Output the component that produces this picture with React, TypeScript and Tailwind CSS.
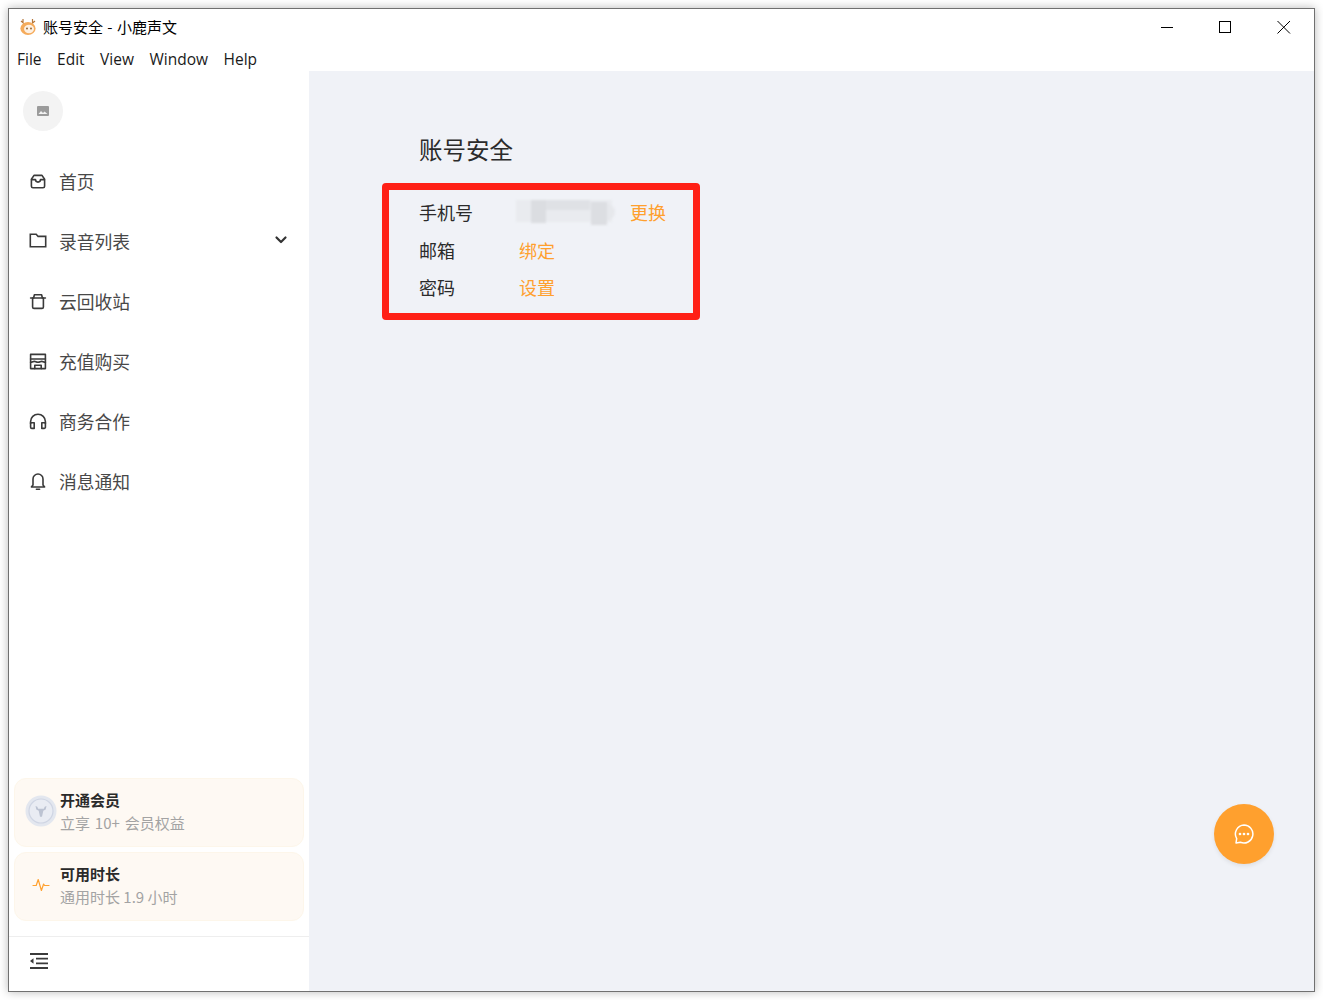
import React from "react";

const cjk = `font-['Noto_Sans_CJK_SC','Noto_Sans',sans-serif]`;

const stroke = { fill: "none", stroke: "#3a3a3a", strokeWidth: 1.6, strokeLinejoin: "round" as const, strokeLinecap: "round" as const };

const Tray = () => (
  <svg width="18" height="18" viewBox="0 0 18 18" {...stroke}>
    <path d="M5 3.4h8l2.6 3.8v7a1.6 1.6 0 0 1-1.6 1.6H4a1.6 1.6 0 0 1-1.6-1.6V7.2z" />
    <path d="M2.6 7.6h3.9a2.5 2.5 0 0 0 5 0h3.9" />
  </svg>
);
const Folder = () => (
  <svg width="18" height="18" viewBox="0 0 18 18" {...stroke} strokeLinejoin="miter">
    <path d="M1.3 2.2h5.9l1.9 2.2h7.6v10.4H1.3z" />
  </svg>
);
const Trash = () => (
  <svg width="18" height="18" viewBox="0 0 18 18" {...stroke}>
    <path d="M1.6 6h14.8" />
    <path d="M4.6 6l.8-3.2h7.2l.8 3.2" />
    <path d="M3.6 6v9a1.4 1.4 0 0 0 1.4 1.4h8a1.4 1.4 0 0 0 1.4-1.4V6" />
  </svg>
);
const Store = () => (
  <svg width="18" height="18" viewBox="0 0 18 18" {...stroke}>
    <path d="M1.6 2.4h14.8v14.2H1.6z" />
    <path d="M1.6 7h14.8" />
    <path d="M1.6 10.2c1.9 0 2.4-.8 3.7-.8s1.8.8 3.7.8 2.4-.8 3.7-.8 1.8.8 3.7.8" />
    <path d="M5.8 16.6v-3.4h6.4v3.4" />
  </svg>
);
const Headphones = () => (
  <svg width="18" height="18" viewBox="0 0 18 18" {...stroke}>
    <path d="M1.6 11.4V9.6a7.4 7.4 0 0 1 14.8 0v1.8" />
    <path d="M1.6 10.8h3.6v5.6H2.8a1.2 1.2 0 0 1-1.2-1.2zM16.4 10.8h-3.6v5.6h2.4a1.2 1.2 0 0 0 1.2-1.2z" />
  </svg>
);
const Bell = () => (
  <svg width="18" height="18" viewBox="0 0 18 18" {...stroke}>
    <path d="M9 2a5 5 0 0 0-5 5v6l-1.6 2h13.2L14 13V7a5 5 0 0 0-5-5z" />
    <path d="M7.4 17.2h3.2" />
  </svg>
);

const nav = [
  { label: "首页", icon: <Tray /> },
  { label: "录音列表", icon: <Folder />, chevron: true },
  { label: "云回收站", icon: <Trash /> },
  { label: "充值购买", icon: <Store /> },
  { label: "商务合作", icon: <Headphones /> },
  { label: "消息通知", icon: <Bell /> },
];

function Promo({ title, sub, subClass, icon }: { title: string; sub: string; subClass: string; icon: React.ReactNode }) {
  return (
    <div className="h-[69px] rounded-[12px] border border-[#fdf6ea] bg-[#fef9f3] flex items-center">
      <div className="w-[45px] pl-[6px] mb-[4px] flex justify-center items-center shrink-0">{icon}</div>
      <div className="flex flex-col mb-[2px]">
        <div className="text-[15px] leading-[22px] font-bold text-[#2a2a2a]">{title}</div>
        <div className={`text-[15px] leading-[22px] mt-[1px] text-[#a3a3a3] ${subClass}`}>{sub}</div>
      </div>
    </div>
  );
}

const Medal = () => (
  <svg width="34" height="34" viewBox="0 0 34 34">
    <circle cx="17" cy="17" r="15.5" fill="#e3e7ef" />
    <circle cx="17" cy="17" r="12" fill="#e9ecf3" stroke="#cfd5e3" strokeWidth="1.2" />
    <path d="M11.5 12l1.8.8.9 2h5.6l.9-2 1.8-.8-.8 3.6-2.4 1.2-1.3 6h-2l-1.3-6-2.4-1.2z" fill="#bcc3d2" />
  </svg>
);

const Pulse = () => (
  <svg width="18" height="16" viewBox="0 0 18 16" fill="none" stroke="#ffa12f" strokeWidth="1.2" strokeLinejoin="round" strokeLinecap="round">
    <path d="M1 8.5h3.2l2-6 3.2 11 2.2-6.5 1 1.5H17" />
  </svg>
);

const Logo = () => (
  <svg width="18" height="18" viewBox="0 0 18 18">
    <path d="M4 1v4M2 3l3 2.5M13.5 1v4M16 3l-3 2.5" stroke="#b5763a" strokeWidth="1.2" fill="none" />
    <ellipse cx="9" cy="10.5" rx="7.6" ry="6.5" fill="#f5ab5b" />
    <ellipse cx="10" cy="11" rx="5" ry="4.2" fill="#fdf0e2" />
    <circle cx="8" cy="10.5" r="0.9" fill="#8a5a2c" />
    <circle cx="12" cy="10.5" r="0.9" fill="#8a5a2c" />
  </svg>
);

function Row({ label, children }: { label: string; children: React.ReactNode }) {
  return (
    <div className="flex items-center h-[37.5px]">
      <div className="w-[100px] text-[#2b2b2b]">{label}</div>
      {children}
    </div>
  );
}

export default function App() {
  return (
    <div className={`w-[1323px] h-[1000px] bg-white p-[8px] overflow-hidden ${cjk}`}>
      <div className="w-[1307px] h-[984px] border border-[#707070] bg-white flex flex-col shadow-[0_0_9px_rgba(0,0,0,0.28)]">
        <div className="h-[31px] shrink-0 flex items-center pl-[10px] pt-[4px]">
          <Logo />
          <span className="ml-[6px] text-[15px] leading-[20px] text-black [word-spacing:1px]">账号安全 - 小鹿声文</span>
          <div className="ml-auto flex items-center pt-[2px]">
            <svg width="60" height="20" viewBox="0 0 60 20" fill="none" stroke="#000" strokeWidth="1"><path d="M25 9.5h12" /></svg>
            <svg width="58" height="20" viewBox="0 0 58 20" fill="none" stroke="#000" strokeWidth="1"><rect x="23.5" y="3.5" width="11" height="11" /></svg>
            <svg width="60" height="20" viewBox="0 0 60 20" fill="none" stroke="#000" strokeWidth="1"><path d="M23.5 3l12.5 12.5M36 3L23.5 15.5" /></svg>
          </div>
        </div>
        <div className="h-[31px] shrink-0 flex items-center pl-[8px] pt-[6px] gap-[15.5px] font-['Open_Sans',sans-serif] text-[15.5px] leading-[20px] text-[#1a1a1a]">
          <span>File</span><span>Edit</span><span>View</span><span>Window</span><span>Help</span>
        </div>
        <div className="flex-1 flex min-h-0">
          <aside className="w-[300px] shrink-0 bg-white flex flex-col">
            <div className="h-[40px] w-[40px] mt-[20px] ml-[14px] rounded-full bg-[#f3f3f3] flex items-center justify-center shrink-0">
              <svg width="12" height="10" viewBox="0 0 12 10">
                <rect width="12" height="10" rx="1" fill="#9b9b9b" />
                <path d="M1.5 8l2.5-3 2 2 1.5-1.5L10.5 8z" fill="#f3f3f3" />
              </svg>
            </div>
            <nav className="mt-[20px] flex flex-col">
              {nav.map((n) => (
                <div key={n.label} className="h-[60px] flex items-center pl-[20px] pr-[21px] text-[17.8px] leading-[24px] text-[#484848]">
                  {n.icon}
                  <span className="ml-[12px] mb-[1px]">{n.label}</span>
                  {n.chevron && (
                    <svg className="ml-auto mb-[2px]" width="14" height="14" viewBox="0 0 14 14" fill="none" stroke="#333" strokeWidth="2.2" strokeLinecap="round" strokeLinejoin="round">
                      <path d="M2.5 4.5L7 9l4.5-4.5" />
                    </svg>
                  )}
                </div>
              ))}
            </nav>
            <div className="mt-auto px-[5px] flex flex-col gap-[5px]">
              <Promo title="开通会员" sub="立享 10+ 会员权益" subClass="[word-spacing:1.5px]" icon={<Medal />} />
              <Promo title="可用时长" sub="通用时长 1.9 小时" subClass="[word-spacing:0px]" icon={<Pulse />} />
            </div>
            <div className="mt-[15px] h-[55px] shrink-0 border-t border-[#eeeeee] flex items-center pl-[21px] pb-[7px]">
              <svg width="18" height="16" viewBox="0 0 18 16" fill="none" stroke="#3a3a3a" strokeWidth="1.8">
                <path d="M0 1h18M6 5.7h12M6 10.3h12M0 15h18" />
                <path d="M3.5 5.2v5.6L0 8z" fill="#3a3a3a" stroke="none" />
              </svg>
            </div>
          </aside>
          <main className="flex-1 bg-[#f0f2f7] relative pl-[110px] pt-[61px]">
            <h1 className="text-[23.5px] leading-[34px] font-normal text-[#2b2b2b]">账号安全</h1>
            <div className="mt-[17px] -ml-[37px] w-[318px] h-[137px] border-[7px] border-[#ff2016] rounded-[4px] pl-[30px] pt-[3.5px] text-[18px] leading-[24px]">
              <Row label="手机号">
                <div className="relative w-[100px] h-[26px] mt-[2px] shrink-0 blur-[1px]">
                  <div className="absolute left-[-3px] top-0 w-[96px] h-[22px] bg-[#e9ebef]" />
                  <div className="absolute left-[12px] top-0 w-[15px] h-[23px] bg-[#dbdde1]" />
                  <div className="absolute left-[27px] top-0 w-[44px] h-[10px] bg-[#dfe1e5]" />
                  <div className="absolute left-[72px] top-[2px] w-[16px] h-[23px] bg-[#dcdee2]" />
                  <div className="absolute left-[88px] top-[4px] w-[8px] h-[16px] rounded-r-full bg-[#e6e8ec]" />
                </div>
                <span className="ml-[11px] text-[#ffa02e]">更换</span>
              </Row>
              <Row label="邮箱"><span className="text-[#ffa02e]">绑定</span></Row>
              <Row label="密码"><span className="text-[#ffa02e]">设置</span></Row>
            </div>
            <div className="absolute right-[40px] bottom-[127px] w-[60px] h-[60px] rounded-full bg-[#ffa02e] shadow-[0_2px_4px_rgba(0,0,0,0.08)] flex items-center justify-center">
              <svg width="20" height="20" viewBox="0 0 20 20" fill="none" stroke="#fff" strokeWidth="1.5" strokeLinejoin="round">
                <path d="M10 1a9 9 0 1 1-3.6 17.3L2 19l.7-4.4A9 9 0 0 1 10 1z" />
                <circle cx="6" cy="10" r="0.6" fill="#fff" />
                <circle cx="10" cy="10" r="0.6" fill="#fff" />
                <circle cx="14" cy="10" r="0.6" fill="#fff" />
              </svg>
            </div>
          </main>
        </div>
      </div>
    </div>
  );
}
